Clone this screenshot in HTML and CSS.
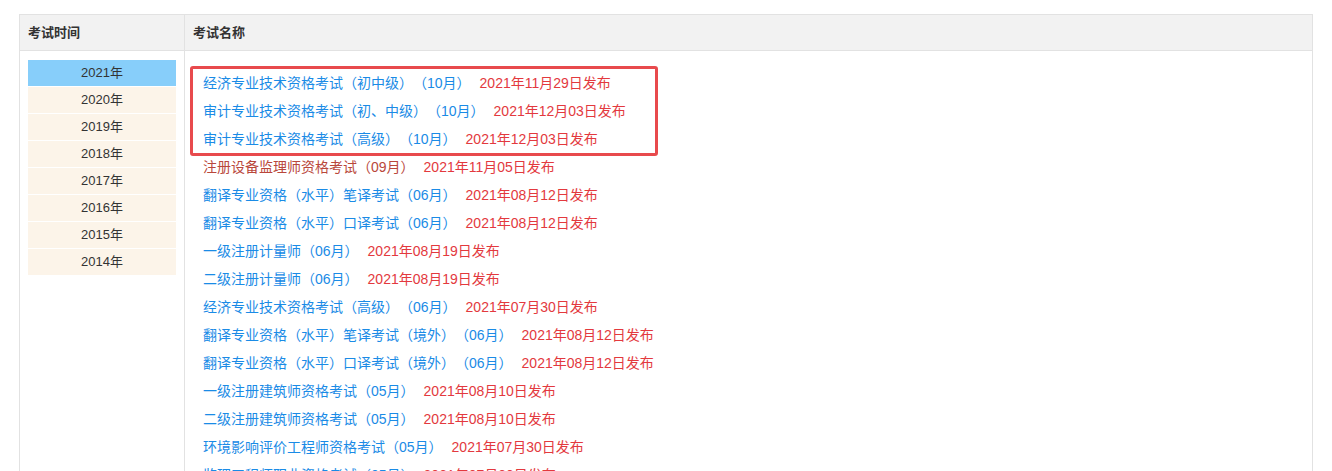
FILE: index.html
```
<!DOCTYPE html>
<html lang="zh-CN">
<head>
    <meta charset="UTF-8">
    <meta name="viewport" content="width=device-width, initial-scale=1.0">
    <title>考试成绩发布</title>
<link rel="stylesheet" href="styles.css">
</head>
<body>

<div class="exam-table">
  <div class="row head">
    <div class="col-time">考试时间</div>
    <div class="col-name">考试名称</div>
  </div>

  <div class="row body">
    <div class="col-time">
      <ul class="years">
        <li class="active">2021年</li>
        <li>2020年</li>
        <li>2019年</li>
        <li>2018年</li>
        <li>2017年</li>
        <li>2016年</li>
        <li>2015年</li>
        <li>2014年</li>
      </ul>
    </div>

    <div class="col-name">
      <ul class="exams">
        <li class="mark">
          <ul>
            <li><a href="#">经济专业技术资格考试（初中级）（10月）</a><span class="date">2021年11月29日发布</span></li>
            <li><a href="#">审计专业技术资格考试（初、中级）（10月）</a><span class="date">2021年12月03日发布</span></li>
            <li><a href="#">审计专业技术资格考试（高级）（10月）</a><span class="date">2021年12月03日发布</span></li>
          </ul>
        </li>
        <li><a href="#" class="visited">注册设备监理师资格考试（09月）</a><span class="date">2021年11月05日发布</span></li>
        <li><a href="#">翻译专业资格（水平）笔译考试（06月）</a><span class="date">2021年08月12日发布</span></li>
        <li><a href="#">翻译专业资格（水平）口译考试（06月）</a><span class="date">2021年08月12日发布</span></li>
        <li><a href="#">一级注册计量师（06月）</a><span class="date">2021年08月19日发布</span></li>
        <li><a href="#">二级注册计量师（06月）</a><span class="date">2021年08月19日发布</span></li>
        <li><a href="#">经济专业技术资格考试（高级）（06月）</a><span class="date">2021年07月30日发布</span></li>
        <li><a href="#">翻译专业资格（水平）笔译考试（境外）（06月）</a><span class="date">2021年08月12日发布</span></li>
        <li><a href="#">翻译专业资格（水平）口译考试（境外）（06月）</a><span class="date">2021年08月12日发布</span></li>
        <li><a href="#">一级注册建筑师资格考试（05月）</a><span class="date">2021年08月10日发布</span></li>
        <li><a href="#">二级注册建筑师资格考试（05月）</a><span class="date">2021年08月10日发布</span></li>
        <li><a href="#">环境影响评价工程师资格考试（05月）</a><span class="date">2021年07月30日发布</span></li>
        <li><a href="#">监理工程师职业资格考试（05月）</a><span class="date">2021年07月30日发布</span></li>
      </ul>
    </div>
  </div>
</div>

</body>
</html>
```

FILE: styles.css
```
* { box-sizing: border-box }

body {
  margin: 0;
  padding: 14px 19px 0 19px;
  font-family: "Liberation Sans", "Noto Sans CJK SC", sans-serif;
  font-size: 13px;
  color: #333;
  background: #fff;
  text-spacing-trim: space-all;
}

ul {
  list-style: none;
  margin: 0;
  padding: 0;
}

.exam-table {
  width: 1294px;
  border: 1px solid #e2e2e2;
  border-bottom: 0;
}

.row {
  display: flex;
}

.col-time {
  width: 165px;
  flex: none;
  border-right: 1px solid #e2e2e2;
}

.col-name {
  flex: 1;
}

.head {
  background: #f2f2f2;
  border-bottom: 1px solid #e2e2e2;
  height: 36px;
  line-height: 35px;
  font-weight: bold;
}

.head .col-time,
.head .col-name {
  padding-left: 8px;
}

/* year list */
.years {
  padding: 9px 8px 400px 8px;
}

.years li {
  height: 27px;
  line-height: 26px;
  text-align: center;
  background: #fcf4e9;
  border-bottom: 1px solid #fff;
}

.years li.active {
  background: #87cefa;
}

/* exam list */
.exams {
  padding: 18px 0 0 18px;
}

.exams li {
  height: 28px;
  line-height: 28px;
  font-size: 14px;
  white-space: nowrap;
}

.exams a {
  color: #1a8be6;
  text-decoration: none;
}

.exams a.visited {
  color: #b9473b;
}

.exams .date {
  color: #e3393e;
  margin-left: 9px;
}

.exams li.mark {
  height: auto;
  position: relative;
}

.exams li.mark::before {
  content: "";
  position: absolute;
  top: -3px;
  bottom: -3px;
  left: -13px;
  width: 462px;
  border: 3px solid #e84a4d;
  border-radius: 3px;
}
```
